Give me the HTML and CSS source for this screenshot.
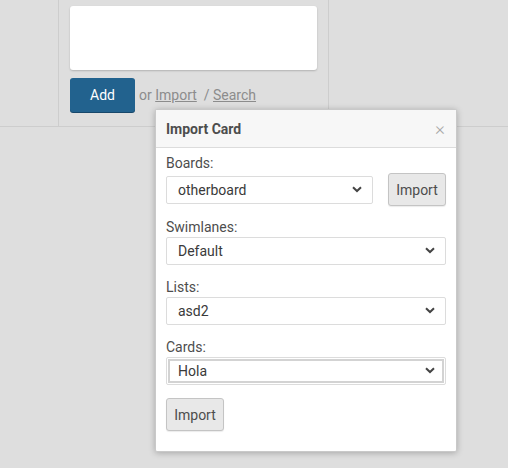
FILE: index.html
```html
<!DOCTYPE html>
<html lang="en">
<head>
  <meta charset="UTF-8">
  <meta name="viewport" content="width=device-width, initial-scale=1.0">
  <title>Import Card</title>
  <link rel="stylesheet" href="styles.css">
</head>
<body>
  <div class="swimlane">
    <div class="swimlane-header"></div>
    <div class="list">
      <textarea class="composer"></textarea>
      <div class="composer-controls">
        <button class="btn-primary">Add</button>
        <span class="composer-links">or <a href="#">Import</a>&nbsp; / <a href="#">Search</a></span>
      </div>
    </div>
  </div>

  <!-- popup opened from the Import link -->
  <div class="pop-over">
    <div class="pop-header">
      <span class="pop-title">Import Card</span>
      <span class="pop-close">&times;</span>
    </div>
    <div class="pop-body">
      <label class="field-label">Boards:</label>
      <div class="board-row">
        <div class="select-wrap board-select">
          <select><option>otherboard</option></select>
          <svg class="chevron" width="10" height="7" viewBox="0 0 10 7"><path d="M1 1.2l4 3.8 4-3.8" fill="none" stroke="#444" stroke-width="2"/></svg>
        </div>
        <button class="btn">Import</button>
      </div>

      <label class="field-label">Swimlanes:</label>
      <div class="select-wrap">
        <select><option>Default</option></select>
        <svg class="chevron" width="10" height="7" viewBox="0 0 10 7"><path d="M1 1.2l4 3.8 4-3.8" fill="none" stroke="#444" stroke-width="2"/></svg>
      </div>

      <label class="field-label">Lists:</label>
      <div class="select-wrap">
        <select><option>asd2</option></select>
        <svg class="chevron" width="10" height="7" viewBox="0 0 10 7"><path d="M1 1.2l4 3.8 4-3.8" fill="none" stroke="#444" stroke-width="2"/></svg>
      </div>

      <label class="field-label">Cards:</label>
      <div class="select-wrap">
        <select class="focused"><option>Hola</option></select>
        <svg class="chevron" width="10" height="7" viewBox="0 0 10 7"><path d="M1 1.2l4 3.8 4-3.8" fill="none" stroke="#444" stroke-width="2"/></svg>
      </div>

      <button class="btn btn-bottom">Import</button>
    </div>
  </div>
</body>
</html>
```

FILE: styles.css
```css
body {
  margin: 0;
  background-color: #dedede;
  font-family: Roboto, "Liberation Sans", sans-serif;
  font-size: 14px;
  color: #4d4d4d;
}

.swimlane {
  display: flex;
  height: 126px;
  border-bottom: 1px solid #cdcdcd;
}

.swimlane-header {
  width: 58px;
}

.list {
  width: 247px;
  padding: 6px 11px 0;
  border-left: 1px solid #cdcdcd;
  border-right: 1px solid #cdcdcd;
}

.composer {
  display: block;
  width: 247px;
  height: 64px;
  margin: 0;
  padding: 0;
  border: none;
  border-radius: 3px;
  background: #fff;
  box-shadow: 0 1px 2px rgba(0, 0, 0, 0.2);
  resize: none;
}

.composer-controls {
  display: flex;
  align-items: center;
  margin-top: 8px;
}

.btn-primary {
  width: 65px;
  height: 34px;
  border: none;
  border-radius: 3px;
  background-color: #22628e;
  box-shadow: 0 1px 0 #17476a;
  color: #fff;
  font-family: inherit;
  font-size: 14px;
}

.composer-links {
  margin-left: 4px;
  color: #8c8c8c;
}

.composer-links a {
  color: #8c8c8c;
  text-decoration: underline;
}

.pop-over {
  position: absolute;
  left: 155px;
  top: 109px;
  width: 300px;
  background: #fff;
  border: 1px solid #c9c9c9;
  border-radius: 2px;
  box-shadow: 0 1px 6px rgba(0, 0, 0, 0.25);
}

.pop-header {
  display: flex;
  justify-content: space-between;
  align-items: center;
  height: 37px;
  padding: 0 10px;
  background: #f7f7f7;
  border-bottom: 1px solid #dcdcdc;
}

.pop-title {
  font-weight: bold;
}

.pop-close {
  color: #a8a8a8;
  font-size: 19px;
  font-weight: 300;
  margin-right: 1px;
}

.pop-body {
  padding: 6px 10px 20px;
}

.field-label {
  display: block;
  line-height: 19px;
}

.board-row {
  display: flex;
  align-items: center;
  justify-content: space-between;
  margin-bottom: 12px;
}

.select-wrap {
  position: relative;
  margin-bottom: 13px;
}

.board-select {
  width: 207px;
  margin-bottom: 0;
}

select {
  display: block;
  width: 100%;
  height: 28px;
  padding: 0 0 0 11px;
  border: 1px solid #dcdcdc;
  border-radius: 2px;
  background: #fff;
  color: #3a3a3a;
  font-family: inherit;
  font-size: 14px;
  appearance: none;
  -webkit-appearance: none;
}

select.focused {
  outline: 2px solid #d3d3d3;
  outline-offset: -4px;
}

.chevron {
  position: absolute;
  right: 11px;
  top: 10px;
  pointer-events: none;
}

.btn {
  width: 58px;
  height: 33px;
  padding: 0;
  border: 1px solid #c4c4c4;
  border-radius: 3px;
  background-color: #e8e8e8;
  box-shadow: 0 1px 1px rgba(0, 0, 0, 0.08);
  color: #4d4d4d;
  font-family: inherit;
  font-size: 14px;
}

.btn-bottom {
  display: block;
}
```
